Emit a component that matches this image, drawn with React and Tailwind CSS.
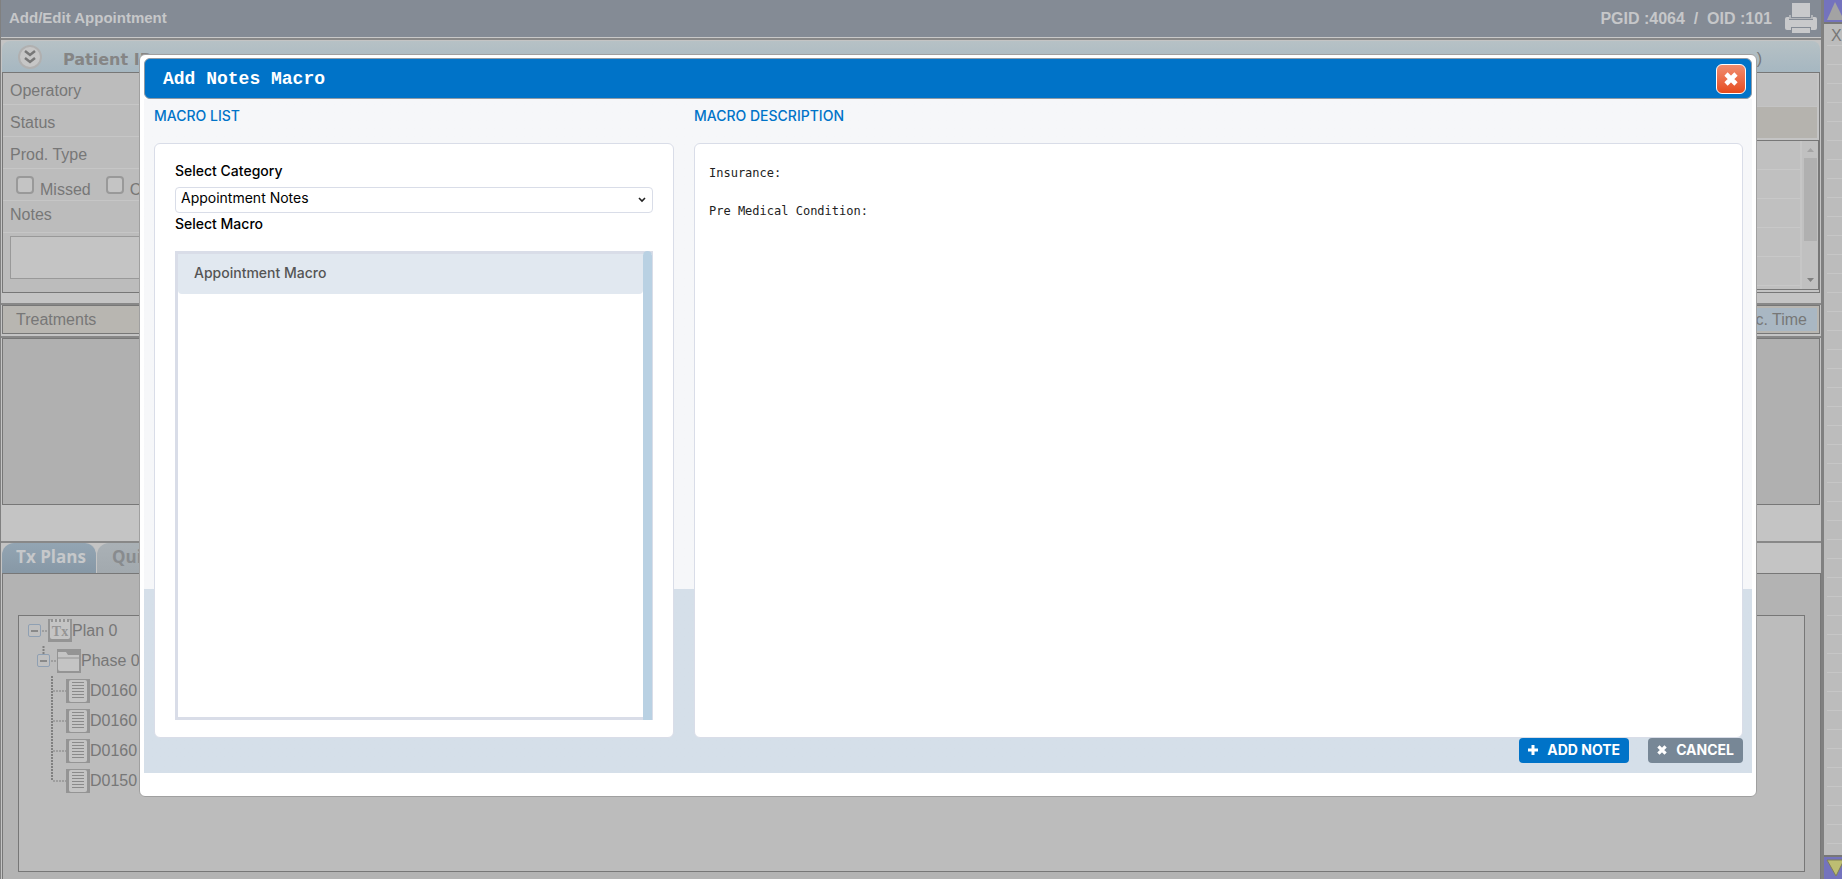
import { useState } from 'react';

const SIDE_ROWS = Array.from({ length: 43 }, (_, i) => i);
const GRID_ROWS = [0, 1, 2, 3, 4];
const FIELDS = ['Operatory', 'Status', 'Prod. Type'];

const TREE = [
  { label: 'Plan 0', level: 0 },
  { label: 'Phase 0', level: 1 },
  { label: 'D0160', level: 2 },
  { label: 'D0160', level: 2 },
  { label: 'D0160', level: 2 },
  { label: 'D0150', level: 2, last: true },
];

const MACROS = {
  'Appointment Macro': 'Insurance:\n\nPre Medical Condition:',
};

const PrinterIcon = () => (
  <svg width="34" height="32" viewBox="0 0 34 32" fill="#c8c9cb">
    <path d="M8 1h18v14H8z" />
    <path d="M1 17q0-2 2-2h2v3h24v-3h2q2 0 2 2v9q0 2-2 2h-4v-3H7v3H3q-2 0-2-2z" />
    <path d="M5 13h2v3h20v-3h2v4H5z" opacity="0.7" />
    <path d="M8 26h18v5H8z" />
  </svg>
);

const Expander = ({ x }) => (
  <g>
    <rect x={x + 0.5} y="8.5" width="12" height="12" rx="1.5" fill="#bfbfbf" stroke="#8fa0b3" />
    <path d={`M${x + 3} 15h7`} stroke="#777" strokeWidth="1.5" />
  </g>
);

const TreeIcon = ({ level, last }) => {
  if (level === 0) {
    return (
      <svg width="45" height="30" className="shrink-0">
        <Expander x={1} />
        <path d="M15 15h6" stroke="#808080" strokeDasharray="2 1" />
        <rect x="21" y="3" width="24" height="23" fill="#949494" />
        <rect x="23" y="3" width="20" height="20" rx="2" fill="#c4c4c4" />
        <path d="M25 3v3M29 3v3M33 3v3M37 3v3M41 3v3" stroke="#949494" strokeWidth="2" />
        <text x="33" y="20" textAnchor="middle" fontFamily="Liberation Serif, serif" fontWeight="bold" fontSize="14" fill="#949494">Tx</text>
      </svg>
    );
  }
  if (level === 1) {
    return (
      <svg width="54" height="30" className="shrink-0">
        <path d="M16.5 0v8" stroke="#808080" strokeWidth="2" strokeDasharray="2 1" />
        <Expander x={10} />
        <path d="M24 15h6" stroke="#808080" strokeDasharray="2 1" />
        <rect x="30" y="3" width="24" height="24" fill="#949494" />
        <path d="M31 6h8l2 3h11v16H33q-2 0-2-2z" fill="#c4c4c4" />
        <path d="M31 12h21" stroke="#949494" />
      </svg>
    );
  }
  return (
    <svg width="63" height="30" className="shrink-0">
      <path d={last ? 'M25 0v15' : 'M25 0v30'} stroke="#808080" strokeWidth="2" strokeDasharray="2 1" />
      <path d="M26 15h13" stroke="#808080" strokeDasharray="2 1" />
      <rect x="39" y="3" width="24" height="24" fill="#949494" />
      <rect x="42" y="4" width="18" height="22" rx="2" fill="#c4c4c4" />
      <path d="M45 6.5h12M45 9.5h12M45 12.5h12M45 15.5h12M45 18.5h12M45 21.5h12" stroke="#8a8a8a" />
    </svg>
  );
};

const Header = () => (
  <header className="flex h-[38px] items-center justify-between border-b border-[#c8c8c8] bg-[#848b95] pl-2 pr-[3px] font-bold text-[#c6c7c9]">
    <h1 className="text-[15px]">Add/Edit Appointment</h1>
    <div className="flex items-center gap-3">
      <span className="whitespace-pre">PGID :4064  /  OID :101</span>
      <button type="button" aria-label="Print" className="pb-[2px]"><PrinterIcon /></button>
    </div>
  </header>
);

const PatientPanel = () => (
  <section className="mx-px">
    <div className="mt-px flex h-[31px] items-center justify-between rounded-t-lg bg-linear-to-b from-[#b6c1c5] to-[#a6b7c1] pl-4 pr-[58px]">
      <div className="flex items-center gap-[21px]">
        <button type="button" aria-label="Expand patient" className="flex size-6 items-center justify-center rounded-full border-2 border-[#b0b0b0] bg-[#c6c6c6]">
          <svg width="14" height="16" viewBox="0 0 14 16" fill="none" stroke="#777" strokeWidth="2.5">
            <path d="M2 2l5 4 5-4M2 9l5 4 5-4" />
          </svg>
        </button>
        <h2 className="pt-[6px] font-['DejaVu_Sans'] text-base font-bold text-[#858585]">Patient ID</h2>
      </div>
      <span className="pt-1">)</span>
    </div>

    <div className="flex h-[221px] border border-[#777] bg-[#bcbcbc]">
      <div className="w-1/2">
        {FIELDS.map(f => (
          <div key={f} className="flex h-8 items-center border-b border-[#c6c6c6] pl-[7px] pt-1">{f}</div>
        ))}
        <div className="flex h-8 items-start gap-[15px] border-b border-[#c6c6c6] pl-[13px] pt-[7px]">
          <label className="flex items-start gap-[6px]">
            <input type="checkbox" className="size-[18px] appearance-none rounded-sm border-2 border-[#999] bg-[#c4c4c4]" />
            <span className="pt-[2px]">Missed</span>
          </label>
          <label className="flex items-start gap-[6px]">
            <input type="checkbox" className="size-[18px] appearance-none rounded-sm border-2 border-[#999] bg-[#c4c4c4]" />
            <span className="pt-[2px]">Confirmed</span>
          </label>
        </div>
        <label htmlFor="notes" className="flex h-8 items-start border-b border-[#c6c6c6] pl-[7px] pt-[2px]">Notes</label>
        <textarea id="notes" className="ml-[7px] mt-[3px] block h-[43px] w-[600px] resize-none border border-[#999] bg-[#c4c4c4]" />
      </div>

      <div className="flex w-1/2 flex-col bg-[#c4c4c4]">
        <div className="mb-px mr-[2px] mt-px h-8 bg-[#c0c0c0]" />
        <div className="mr-[2px] h-[31px] bg-[#b5b3ae]" />
        <div className="mt-[2px] flex h-[150px] border border-[#777] bg-[#c0c0c0]">
          <div className="flex-1">
            {GRID_ROWS.map(r => <div key={r} className="h-[29px] border-b border-[#c8c8c8]" />)}
          </div>
          <div className="flex w-[18px] flex-col items-center justify-between border-l-2 border-[#c6c6c6] bg-[#c0c0c0] py-[7px]">
            <svg width="7" height="4"><path d="M0 4L3.5 0 7 4z" fill="#a4a4a4" /></svg>
            <div className="mb-[31px] h-[83px] w-[13px] bg-[#b0b0b0]" />
            <svg width="7" height="4"><path d="M0 0L3.5 4 7 0z" fill="#808080" /></svg>
          </div>
        </div>
      </div>
    </div>
  </section>
);

const Treatments = () => (
  <section>
    <div className="mt-[10px] border-t-2 border-[#888] px-px">
      <div className="flex h-[29px] items-center justify-between border border-[#777] bg-[#b8b6b1] pl-[13px] pr-[2px]">
        <h2>Treatments</h2>
        <button type="button" className="h-[23px] bg-[#a9b7c3] px-[10px] text-base/6">Calc. Time</button>
      </div>
    </div>
    <div className="mt-[2px] border-t-2 border-[#888] px-px">
      <div className="h-[167px] border border-[#777] bg-[#b0b0b0]" />
    </div>
  </section>
);

const PlanTree = () => (
  <section className="mt-9 flex flex-1 flex-col border-t-2 border-[#888] pl-px">
    <nav className="flex h-[30px] font-['Open_Sans'] text-[17px] font-bold">
      <a href="#tx" className="flex w-[95px] items-start justify-center rounded-t-xl border-r border-[#c4c4c4] bg-linear-to-b from-[#93a5b3] to-[#8798a6] pl-1 pt-px text-[#c6c8ca]">Tx Plans</a>
      <a href="#quick" className="flex w-28 items-start rounded-tl-xl bg-linear-to-b from-[#aab1b6] to-[#a2a9ae] pl-[15px] pt-px text-[#888b8e]">Quick Tx</a>
    </nav>
    <div className="flex flex-1 flex-col border border-b-0 border-[#777] bg-[#b3b3b3] px-[15px] pb-[7px] pt-[41px]">
      <ul className="flex-1 border border-[#777] bg-[#bcbcbc] pl-2">
        {TREE.map((n, i) => (
          <li key={i} className="flex h-[30px] items-start">
            <TreeIcon level={n.level} last={n.last} />
            <span className="pt-[3px]">{n.label}</span>
          </li>
        ))}
      </ul>
    </div>
  </section>
);

const SideBar = () => (
  <aside className="flex h-full w-[21px] shrink-0 flex-col overflow-hidden border-l-[3px] border-[#808080] bg-[#bcbcbc]">
    <button type="button" aria-label="Scroll up" className="h-6 w-[21px] shrink-0 border-b-2 border-[#777] bg-[#7473bd] pl-[3px]">
      <svg width="18" height="18"><path d="M8 0l9 18H0z" fill="#a3a3a3" /></svg>
    </button>
    <div className="flex-1 overflow-hidden pl-[3px]">
      <div className="h-[22px] border-b border-[#c6c6c6] pl-1">X</div>
      {SIDE_ROWS.map(r => <div key={r} className="h-[19px] border-b border-[#c6c6c6]" />)}
    </div>
    <button type="button" aria-label="Scroll down" className="h-6 w-[21px] shrink-0 border-t-2 border-[#777] bg-[#7473bd] pl-[2px]">
      <svg width="18" height="18"><path d="M1 1h17l-8 16z" fill="#bdbd72" stroke="#808055" /></svg>
    </button>
  </aside>
);

const CrossIcon = ({ size }) => (
  <svg width={size} height={size} viewBox="0 0 14 14" stroke="currentColor" strokeWidth="4.6">
    <path d="M2 2l10 10M12 2L2 12" />
  </svg>
);

const MacroDialog = () => {
  const [macro, setMacro] = useState('Appointment Macro');

  return (
    <div role="dialog" aria-label="Add Notes Macro" className="rounded-md border border-[#a0a0a0] bg-white px-1 pb-[23px] pt-[3px] font-['Inter'] text-sm font-medium text-black">
      <div className="flex h-[41px] items-center justify-between rounded-md border border-[#8f9aa5] bg-[#0073c8] pl-[18px] pr-[5px]">
        <h2 className="font-['Liberation_Mono'] text-lg font-bold text-white">Add Notes Macro</h2>
        <button type="button" aria-label="Close" className="flex size-[30px] items-center justify-center rounded-md border border-white bg-linear-to-b from-[#f08c6e] to-[#e64a19] text-white">
          <CrossIcon size={14} />
        </button>
      </div>

      <div className="bg-linear-to-b from-[#f6f7f9] from-[490px] to-[#d5dfe9] to-[490px] pb-[10px] pl-[10px] pr-[9px]">
        <div className="grid grid-cols-[520fr_1049fr] gap-x-5">
          <h3 className="h-11 pt-[7px] text-[#0073c8]">MACRO LIST</h3>
          <h3 className="h-11 pt-[7px] text-[#0073c8]">MACRO DESCRIPTION</h3>

          <div className="h-[595px] rounded-md border border-[#d9dde8] bg-white px-5 pt-[17px]">
            <label htmlFor="category" className="block h-[26px]">Select Category</label>
            <div className="relative">
              <select id="category" className="block h-[26px] w-full appearance-none rounded border border-[#d9dde8] bg-white pb-1 pl-[5px] font-normal">
                <option>Appointment Notes</option>
              </select>
              <svg className="absolute right-[7px] top-[10px]" width="8" height="6" fill="none" stroke="#222" strokeWidth="1.6">
                <path d="M1 1l3 3 3-3" />
              </svg>
            </div>
            <p className="pt-px">Select Macro</p>
            <div className="mt-[17px] flex h-[469px] border-[3px] border-r border-[#d9dde8] text-[#555]">
              <div className="flex-1">
                {Object.keys(MACROS).map(m => (
                  <button key={m} type="button" onClick={() => setMacro(m)} className="h-10 w-full rounded-b bg-[#e1e8f0] pb-[3px] pl-4 text-left">{m}</button>
                ))}
              </div>
              <div className="-my-[3px] w-[9px] rounded-t-full bg-[#b9d1e3]" />
            </div>
          </div>

          <textarea
            aria-label="Macro description"
            readOnly
            value={MACROS[macro]}
            className="h-[595px] w-full resize-none rounded-md border border-[#d9dde8] bg-white px-[14px] py-5 font-['DejaVu_Sans_Mono'] text-xs/[19px] font-normal text-[#222]"
          />
        </div>

        <div className="flex justify-end gap-[19px] font-bold text-white">
          <button type="button" className="flex h-[25px] items-center gap-[9px] rounded bg-[#0073c8] px-[9px] pb-[2px]">
            <svg width="10" height="10" viewBox="0 0 10 10" stroke="currentColor" strokeWidth="3"><path d="M5 0v10M0 5h10" /></svg>
            ADD NOTE
          </button>
          <button type="button" className="flex h-[25px] items-center gap-[9px] rounded bg-[#778796] px-[9px] pb-[2px]">
            <CrossIcon size={10} />
            CANCEL
          </button>
        </div>
      </div>
    </div>
  );
};

const App = () => (
  <div className="relative h-screen overflow-hidden font-['Liberation_Sans'] text-base text-[#777]">
    <div className="flex h-full bg-[#c4c4c4]">
      <main className="flex min-w-0 flex-1 flex-col border-l border-[#808080]">
        <Header />
        <div className="h-[2px] bg-[#888]" />
        <PatientPanel />
        <Treatments />
        <PlanTree />
      </main>
      <SideBar />
    </div>
    <div className="absolute inset-x-0 top-0 pl-[139px] pr-[85px] pt-[54px]">
      <MacroDialog />
    </div>
  </div>
);

export default App;
